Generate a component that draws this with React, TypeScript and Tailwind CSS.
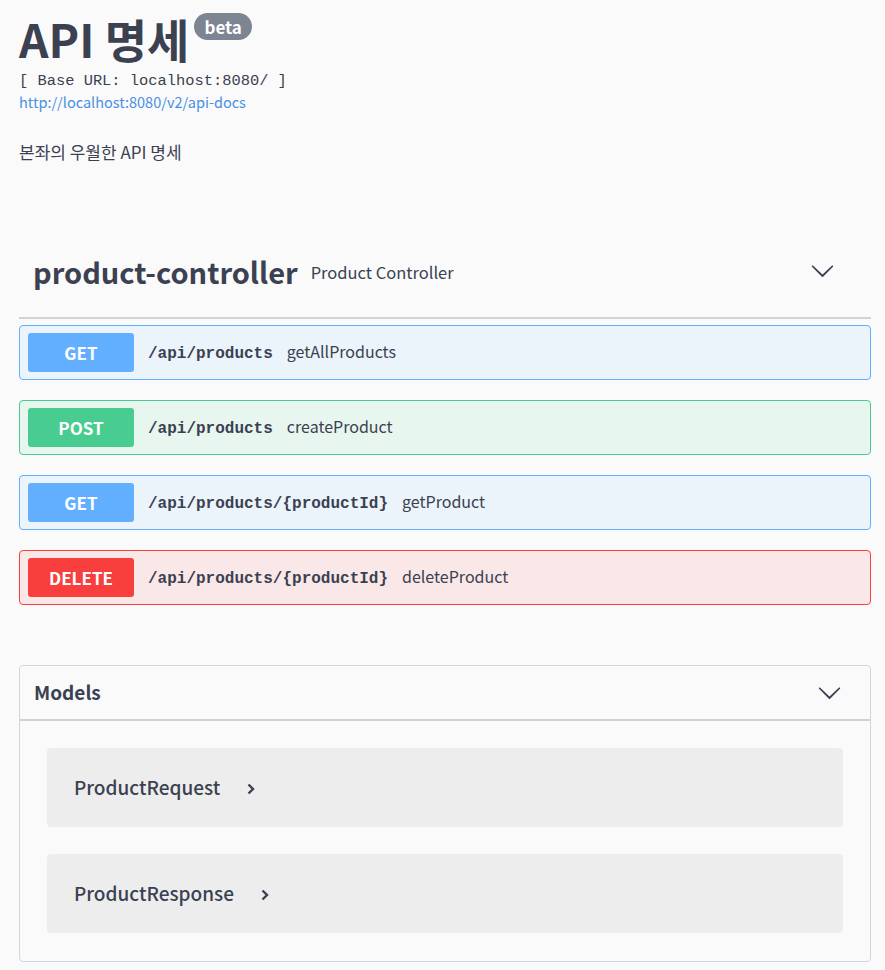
import React from 'react';

const sans = { fontFamily: '"Noto Sans CJK KR", "Noto Sans", sans-serif' };
const mono = { fontFamily: '"Liberation Mono", "DejaVu Sans Mono", monospace' };

type Op = { method: string; path: string; summary: string; badge: string; box: string };

const ops: Op[] = [
  { method: 'GET', path: '/api/products', summary: 'getAllProducts', badge: 'bg-[#61affe]', box: 'border-[#61affe] bg-[#ebf3fb]' },
  { method: 'POST', path: '/api/products', summary: 'createProduct', badge: 'bg-[#49cc90]', box: 'border-[#49cc90] bg-[#e8f6f0]' },
  { method: 'GET', path: '/api/products/{productId}', summary: 'getProduct', badge: 'bg-[#61affe]', box: 'border-[#61affe] bg-[#ebf3fb]' },
  { method: 'DELETE', path: '/api/products/{productId}', summary: 'deleteProduct', badge: 'bg-[#f93e3e]', box: 'border-[#f93e3e] bg-[#fae7e7]' },
];

function Chevron({ className }: { className?: string }) {
  return (
    <svg viewBox="0 0 20 20" className={className} fill="currentColor">
      <path d="M17.418 6.109c.272-.268.709-.268.979 0s.271.701 0 .969l-7.908 7.83c-.27.268-.707.268-.979 0l-7.908-7.83c-.27-.268-.27-.701 0-.969.271-.268.709-.268.979 0L10 13.25l7.418-7.141z" />
    </svg>
  );
}

function SmallArrow() {
  return (
    <svg viewBox="0 0 10 14" className="w-[10px] h-[14px] text-[#3b4151]" fill="none" stroke="currentColor" strokeWidth="2.4">
      <path d="M2.5 2.5 L7 7 L2.5 11.5" />
    </svg>
  );
}

export default function App() {
  return (
    <div className="min-h-screen bg-[#fafafa] text-[#3b4151] pl-[19px] pr-[14px] pb-6" style={sans}>
      {/* Info */}
      <div className="pt-[6px]">
        <div className="flex items-start">
          <h2 className="text-[46px] leading-[64px] font-bold text-[#3b4151]">API 명세</h2>
          <span className="ml-[5px] mt-[7px] bg-[#7d8492] text-white text-[17px] leading-[27px] font-bold rounded-full px-[10px]">beta</span>
        </div>
        <div className="text-[15.4px] leading-[20px] mt-[1px]" style={mono}>[ Base URL: localhost:8080/ ]</div>
        <a className="block text-[14.5px] leading-[22px] text-[#4990e2]">http://localhost:8080/v2/api-docs</a>
        <p className="text-[17px] leading-[24px] mt-[27px]">본좌의 우월한 API 명세</p>
      </div>

      {/* Tag */}
      <div className="mt-[64px]">
        <div className="flex items-center h-[91px] pl-[14px] pr-[36px] border-b-2 border-[#d0d2d6]">
          <span className="text-[29px] font-bold leading-none mb-[3px]">product-controller</span>
          <span className="text-[16.5px] ml-[13px]">Product Controller</span>
          <Chevron className="ml-auto w-[25px] h-[25px] text-[#3b4151] mb-[4px]" />
        </div>
        <div className="flex flex-col gap-[20px] mt-[6px]">
          {ops.map((op, i) => (
            <div key={i} className={`flex items-center h-[55px] border rounded-[4px] px-[8px] ${op.box}`}>
              <span className={`w-[106px] h-[39px] flex items-center justify-center rounded-[3px] text-white text-[17px] font-bold ${op.badge}`}>
                {op.method}
              </span>
              <span className="ml-[14px] text-[16px] leading-[20px] font-bold text-[#3b4151] mt-[2px]" style={mono}>{op.path}</span>
              <span className="ml-[14px] text-[16px] text-[#3b4151] mb-[4px]">{op.summary}</span>
            </div>
          ))}
        </div>
      </div>

      {/* Models */}
      <div className="mt-[60px] border border-[#d4d6da] rounded-[4px]">
        <div className="flex items-center h-[55px] pl-[14px] pr-[28px] border-b-2 border-[#d0d2d6]">
          <span className="text-[19px] font-bold">Models</span>
          <Chevron className="ml-auto w-[25px] h-[25px] text-[#3b4151]" />
        </div>
        <div className="px-[27px] pt-[27px] pb-[28px] flex flex-col gap-[27px]">
          {['ProductRequest', 'ProductResponse'].map((m) => (
            <div key={m} className="h-[79px] bg-[#ededed] rounded-[4px] flex items-center pl-[27px]">
              <span className="text-[19px] font-medium">{m}</span>
              <span className="ml-[26px] mt-[2px]"><SmallArrow /></span>
            </div>
          ))}
        </div>
      </div>
    </div>
  );
}
